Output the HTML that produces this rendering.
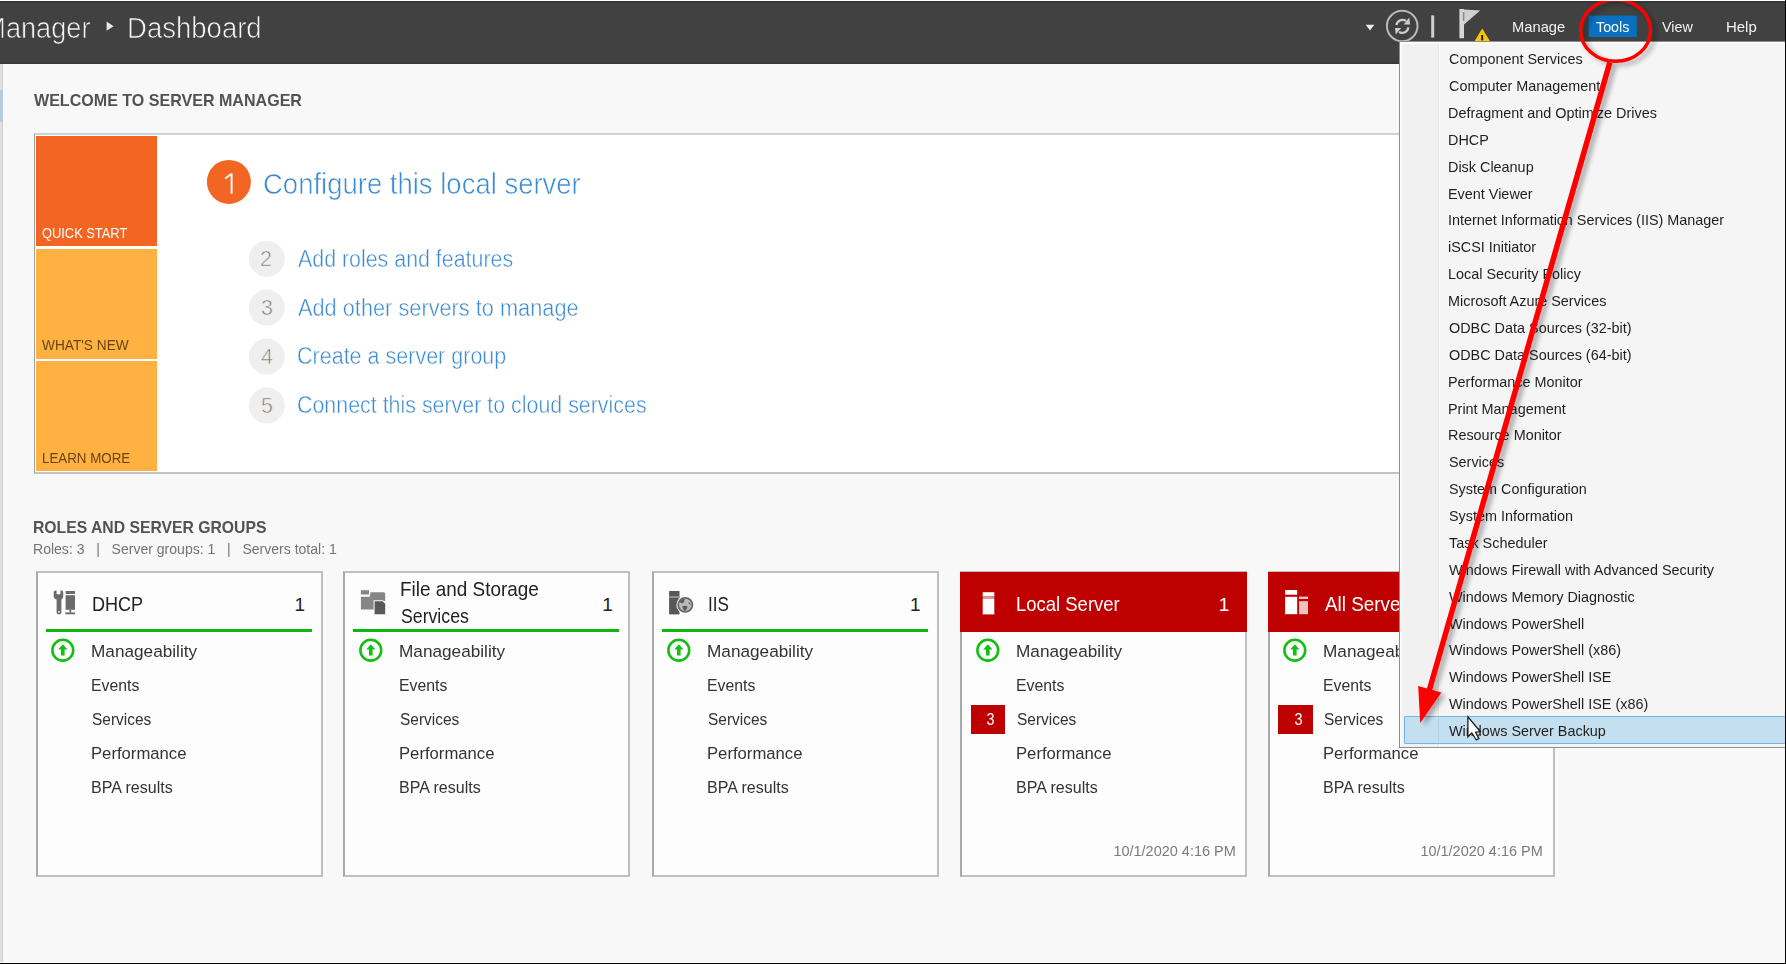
<!DOCTYPE html>
<html><head><meta charset="utf-8">
<style>
*{margin:0;padding:0;box-sizing:border-box}
html,body{width:1786px;height:964px;overflow:hidden}
body{position:relative;background:#f8f8f8;font-family:"Liberation Sans",sans-serif;color:#333}
.a{position:absolute}
.t{position:absolute;white-space:nowrap}
.card{top:571px;width:287px;height:305.5px;background:#fdfdfd;border:2px solid #bfbfbf;border-left-color:#a9a9a9}
.badge{top:704.6px;width:34.4px;height:29.6px;background:#bf0000}
</style></head><body>
<div class="a" style="left:0;top:0;width:1786px;height:1px;background:#fff"></div>
<div class="a" style="left:0;top:1px;width:1786px;height:2px;background:#353535"></div>
<div class="a" style="left:0;top:3px;width:1786px;height:59px;background:#414141"></div>
<div class="a" style="left:0;top:62px;width:1786px;height:2px;background:#3a3a3a"></div>
<div class="a" style="left:0;top:64px;width:2px;height:898px;background:#e0e0e0"></div>
<div class="a" style="left:2px;top:64px;width:1px;height:898px;background:#d0d0d0"></div>
<div class="a" style="left:0;top:90px;width:3px;height:32px;background:#b9cbd8"></div>
<div class="a" style="left:0;top:962px;width:1786px;height:1px;background:#fff"></div>
<div class="a" style="left:0;top:963px;width:1786px;height:1px;background:#000"></div>
<div class="a" style="left:1785px;top:0;width:1px;height:964px;background:#000"></div>
<!-- breadcrumb triangle -->
<svg class="a" style="left:0;top:0" width="200" height="64"><polygon points="106.6,21.6 113.6,26.2 106.6,30.8" fill="#e8e8e8"/></svg>

<!-- welcome box -->
<div class="a" style="left:34.3px;top:133.4px;width:1500px;height:340.8px;background:#fff;border-style:solid;border-color:#cdd1d5 #bdbdbd #c4c4c4 #a2a2a2;border-width:2.4px 0 2.4px 1.8px"></div>
<div class="a" style="left:36.3px;top:136.0px;width:120.3px;height:110.2px;background:#f26522"></div>
<div class="a" style="left:36.3px;top:248.9px;width:120.3px;height:109.7px;background:#ffb142"></div>
<div class="a" style="left:36.3px;top:361.2px;width:120.3px;height:110.1px;background:#ffb142"></div>
<svg class="a" style="left:0;top:0" width="300" height="480">
<circle cx="228.9" cy="181.9" r="22" fill="#f26522"/>
<path d="M231.6 173.6 L231.6 193.7 M231.6 173.8 L225.2 178.6" stroke="#fff" stroke-width="1.9" fill="none"/>
<circle cx="266.8" cy="258.8" r="18" fill="#efefef"/>
<circle cx="266.8" cy="307.6" r="18" fill="#efefef"/>
<circle cx="266.8" cy="356.6" r="18" fill="#efefef"/>
<circle cx="266.8" cy="405.6" r="18" fill="#efefef"/>
</svg>
<div class="a card" style="left:36.0px"></div>
<div class="a" style="left:46.0px;top:629px;width:266px;height:3.2px;background:#0bb80b"></div>
<svg class="a" style="left:51.4px;top:638px" width="25" height="25" viewBox="0 0 25 25"><circle cx="11.8" cy="12.2" r="10.4" fill="none" stroke="#13bf13" stroke-width="2.6"/><path d="M11.8 6.2 L16.4 11.6 L13.6 11.6 L13.6 17.6 L10.0 17.6 L10.0 11.6 L7.2 11.6 Z" fill="#13bf13"/></svg>
<div class="a card" style="left:343.4px"></div>
<div class="a" style="left:353.4px;top:629px;width:266px;height:3.2px;background:#0bb80b"></div>
<svg class="a" style="left:358.8px;top:638px" width="25" height="25" viewBox="0 0 25 25"><circle cx="11.8" cy="12.2" r="10.4" fill="none" stroke="#13bf13" stroke-width="2.6"/><path d="M11.8 6.2 L16.4 11.6 L13.6 11.6 L13.6 17.6 L10.0 17.6 L10.0 11.6 L7.2 11.6 Z" fill="#13bf13"/></svg>
<div class="a card" style="left:651.6px"></div>
<div class="a" style="left:661.6px;top:629px;width:266px;height:3.2px;background:#0bb80b"></div>
<svg class="a" style="left:667.0px;top:638px" width="25" height="25" viewBox="0 0 25 25"><circle cx="11.8" cy="12.2" r="10.4" fill="none" stroke="#13bf13" stroke-width="2.6"/><path d="M11.8 6.2 L16.4 11.6 L13.6 11.6 L13.6 17.6 L10.0 17.6 L10.0 11.6 L7.2 11.6 Z" fill="#13bf13"/></svg>
<div class="a card" style="left:960.3px"></div>
<div class="a" style="left:960.3px;top:572px;width:287px;height:60.2px;background:#bf0000"></div>
<div class="a badge" style="left:970.7px"></div>
<svg class="a" style="left:975.7px;top:638px" width="25" height="25" viewBox="0 0 25 25"><circle cx="11.8" cy="12.2" r="10.4" fill="none" stroke="#13bf13" stroke-width="2.6"/><path d="M11.8 6.2 L16.4 11.6 L13.6 11.6 L13.6 17.6 L10.0 17.6 L10.0 11.6 L7.2 11.6 Z" fill="#13bf13"/></svg>
<div class="a card" style="left:1268.0px"></div>
<div class="a" style="left:1268.0px;top:572px;width:287px;height:60.2px;background:#bf0000"></div>
<div class="a badge" style="left:1278.4px"></div>
<svg class="a" style="left:1283.4px;top:638px" width="25" height="25" viewBox="0 0 25 25"><circle cx="11.8" cy="12.2" r="10.4" fill="none" stroke="#13bf13" stroke-width="2.6"/><path d="M11.8 6.2 L16.4 11.6 L13.6 11.6 L13.6 17.6 L10.0 17.6 L10.0 11.6 L7.2 11.6 Z" fill="#13bf13"/></svg>
<svg class="a" style="left:0;top:0" width="1400" height="964">
<g fill="#6b6b6b">
 <path d="M53.7 592.5 Q53.7 590.4 55.6 590.4 L56.6 590.4 L56.6 594.2 L60.4 594.2 L60.4 590.4 L61.3 590.4 Q63.2 590.4 63.2 592.5 L63.2 596.5 Q63.2 598.8 61.4 599.4 L61.4 612.4 Q61.4 614.4 59.0 614.4 Q56.6 614.4 56.6 612.4 L56.6 599.4 Q53.7 598.8 53.7 596.5 Z"/>
 <rect x="65.6" y="591" width="9.4" height="3" />
 <rect x="65.6" y="595.2" width="9.4" height="14.6" />
 <rect x="69.4" y="609.6" width="1.8" height="3"/>
 <rect x="65.3" y="612.4" width="9.8" height="1.9"/>
</g>
<circle cx="59" cy="611.8" r="0.9" fill="#fdfdfd"/>
<g>
 <rect x="360.9" y="590.2" width="8.1" height="4.3" fill="#858585"/>
 <path d="M370.6 592.2 L383.6 592.2 Q385.2 592.2 385.2 593.8 L385.2 601 L374.6 601 L374.6 609.5 L360.9 609.5 L360.9 596.8 L369.6 596.8 Z" fill="#858585"/>
 <path d="M373.6 600.2 L383 600.2 L386.2 603.4 L386.2 615.2 L373.6 615.2 Z" fill="#fdfdfd"/>
 <path d="M374.6 601.2 L382.6 601.2 L385.2 603.8 L385.2 614.2 L374.6 614.2 Z" fill="#595959"/>
</g>
<g>
 <rect x="669.1" y="591" width="10.4" height="23.4" fill="#585858"/>
 <rect x="669.1" y="596.2" width="10.4" height="1.6" fill="#a0a0a0"/>
 <circle cx="685.3" cy="604.9" r="8.9" fill="#fdfdfd"/>
 <circle cx="685.3" cy="604.9" r="7.1" fill="#b9b9b9" stroke="#666" stroke-width="1.7"/>
 <path d="M680.2 600.6 Q682.2 598.6 684.6 599.0 Q684.4 601.4 683.4 603.0 Q681.2 603.6 680.0 602.6 Z" fill="#5a5a5a"/>
 <path d="M682.2 606.2 Q684.8 605.4 687.6 606.4 Q687.4 609.4 684.8 611.2 Q683.0 609.2 682.2 606.2 Z" fill="#5a5a5a"/>
 <path d="M688.0 601.6 Q690.2 602.6 690.8 604.6 Q689.2 605.0 688.0 601.6 Z" fill="#5a5a5a"/>
</g>
<g fill="#ffffff">
 <rect x="982.7" y="592.2" width="11.6" height="4.2"/>
 <rect x="982.7" y="596.4" width="11.6" height="2.5" fill="#e39a9a"/>
 <rect x="982.7" y="598.9" width="11.6" height="15.5"/>
</g>
<g>
 <rect x="1285.1" y="590" width="12.1" height="4.7" fill="#fff"/>
 <rect x="1285.1" y="596.8" width="12.1" height="17.4" fill="#fff"/>
 <rect x="1299" y="596.6" width="9" height="2.4" fill="#efc5c5"/>
 <rect x="1299" y="601.2" width="9" height="13" fill="#efc2c2"/>
</g>
</svg>
<div id="t0" class="t" style="right:1695.46px;top:13.32px;font-size:29.50px;line-height:29.50px;color:#f4f4f4;font-weight:normal;transform:scaleX(0.9200);transform-origin:right 0;-webkit-text-stroke:0.7px #414141;">Manager</div>
<div id="t1" class="t" style="left:126.63px;top:13.32px;font-size:29.50px;line-height:29.50px;color:#f4f4f4;font-weight:normal;transform:scaleX(0.9332);transform-origin:left 0;-webkit-text-stroke:0.7px #414141;">Dashboard</div>
<div id="t6" class="t" style="left:33.60px;top:91.61px;font-size:17.00px;line-height:17.00px;color:#525252;font-weight:bold;transform:scaleX(0.9446);transform-origin:left 0;">WELCOME TO SERVER MANAGER</div>
<div id="t7" class="t" style="left:42.00px;top:224.68px;font-size:15.50px;line-height:15.50px;color:#ffffff;font-weight:normal;transform:scaleX(0.8296);transform-origin:left 0;">QUICK START</div>
<div id="t8" class="t" style="left:42.00px;top:337.08px;font-size:15.50px;line-height:15.50px;color:#6a4512;font-weight:normal;transform:scaleX(0.8822);transform-origin:left 0;">WHAT'S NEW</div>
<div id="t9" class="t" style="left:41.84px;top:449.68px;font-size:15.50px;line-height:15.50px;color:#6a4512;font-weight:normal;transform:scaleX(0.8601);transform-origin:left 0;">LEARN MORE</div>
<div id="t10" class="t" style="left:262.87px;top:168.72px;font-size:29.50px;line-height:29.50px;color:#3a8ad4;font-weight:normal;transform:scaleX(0.9318);transform-origin:left 0;-webkit-text-stroke:0.6px #fff;">Configure this local server</div>
<div id="t11" class="t" style="left:298.30px;top:247.67px;font-size:23.30px;line-height:23.30px;color:#3a8ad4;font-weight:normal;transform:scaleX(0.9176);transform-origin:left 0;-webkit-text-stroke:0.45px #fff;">Add roles and features</div>
<div id="t12" class="t" style="left:260.00px;top:249.20px;font-size:21.50px;line-height:21.50px;color:#7a7a7a;font-weight:normal;-webkit-text-stroke:0.6px #efefef;">2</div>
<div id="t13" class="t" style="left:298.30px;top:296.57px;font-size:23.30px;line-height:23.30px;color:#3a8ad4;font-weight:normal;transform:scaleX(0.9340);transform-origin:left 0;-webkit-text-stroke:0.45px #fff;">Add other servers to manage</div>
<div id="t14" class="t" style="left:261.00px;top:298.10px;font-size:21.50px;line-height:21.50px;color:#7a7a7a;font-weight:normal;-webkit-text-stroke:0.6px #efefef;">3</div>
<div id="t15" class="t" style="left:297.38px;top:345.47px;font-size:23.30px;line-height:23.30px;color:#3a8ad4;font-weight:normal;transform:scaleX(0.9236);transform-origin:left 0;-webkit-text-stroke:0.45px #fff;">Create a server group</div>
<div id="t16" class="t" style="left:261.00px;top:347.00px;font-size:21.50px;line-height:21.50px;color:#7a7a7a;font-weight:normal;-webkit-text-stroke:0.6px #efefef;">4</div>
<div id="t17" class="t" style="left:297.38px;top:394.37px;font-size:23.30px;line-height:23.30px;color:#3a8ad4;font-weight:normal;transform:scaleX(0.9184);transform-origin:left 0;-webkit-text-stroke:0.45px #fff;">Connect this server to cloud services</div>
<div id="t18" class="t" style="left:261.00px;top:395.90px;font-size:21.50px;line-height:21.50px;color:#7a7a7a;font-weight:normal;-webkit-text-stroke:0.6px #efefef;">5</div>
<div id="t19" class="t" style="left:33.05px;top:519.33px;font-size:16.50px;line-height:16.50px;color:#525252;font-weight:bold;transform:scaleX(0.9534);transform-origin:left 0;">ROLES AND SERVER GROUPS</div>
<div id="t20" class="t" style="left:33.00px;top:542.15px;font-size:14.00px;line-height:14.00px;color:#747474;font-weight:normal;transform:scaleX(1.0028);transform-origin:left 0;">Roles: 3 &nbsp; | &nbsp; Server groups: 1 &nbsp; | &nbsp; Servers total: 1</div>
<div id="t21" class="t" style="left:91.91px;top:594.01px;font-size:20.30px;line-height:20.30px;color:#222222;font-weight:normal;transform:scaleX(0.8885);transform-origin:left 0;">DHCP</div>
<div id="t22" class="t" style="right:1481.03px;top:595.11px;font-size:19.00px;line-height:19.00px;color:#222222;font-weight:normal;">1</div>
<div id="t23" class="t" style="left:91.31px;top:642.87px;font-size:17.40px;line-height:17.40px;color:#333333;font-weight:normal;transform:scaleX(0.9886);transform-origin:left 0;">Manageability</div>
<div id="t24" class="t" style="left:91.39px;top:677.02px;font-size:17.40px;line-height:17.40px;color:#333333;font-weight:normal;transform:scaleX(0.9091);transform-origin:left 0;">Events</div>
<div id="t25" class="t" style="left:92.30px;top:711.17px;font-size:17.40px;line-height:17.40px;color:#333333;font-weight:normal;transform:scaleX(0.8897);transform-origin:left 0;">Services</div>
<div id="t26" class="t" style="left:91.34px;top:745.32px;font-size:17.40px;line-height:17.40px;color:#333333;font-weight:normal;transform:scaleX(0.9583);transform-origin:left 0;">Performance</div>
<div id="t27" class="t" style="left:91.38px;top:779.47px;font-size:17.40px;line-height:17.40px;color:#333333;font-weight:normal;transform:scaleX(0.9216);transform-origin:left 0;">BPA results</div>
<div id="t28" class="t" style="left:399.64px;top:580.44px;font-size:19.80px;line-height:19.80px;color:#222222;font-weight:normal;transform:scaleX(0.9559);transform-origin:left 0;">File and Storage</div>
<div id="t29" class="t" style="left:400.60px;top:607.24px;font-size:19.80px;line-height:19.80px;color:#222222;font-weight:normal;transform:scaleX(0.8939);transform-origin:left 0;">Services</div>
<div id="t30" class="t" style="right:1173.13px;top:594.51px;font-size:19.00px;line-height:19.00px;color:#222222;font-weight:normal;">1</div>
<div id="t31" class="t" style="left:398.71px;top:642.87px;font-size:17.40px;line-height:17.40px;color:#333333;font-weight:normal;transform:scaleX(0.9886);transform-origin:left 0;">Manageability</div>
<div id="t32" class="t" style="left:398.79px;top:677.02px;font-size:17.40px;line-height:17.40px;color:#333333;font-weight:normal;transform:scaleX(0.9091);transform-origin:left 0;">Events</div>
<div id="t33" class="t" style="left:399.70px;top:711.17px;font-size:17.40px;line-height:17.40px;color:#333333;font-weight:normal;transform:scaleX(0.8897);transform-origin:left 0;">Services</div>
<div id="t34" class="t" style="left:398.74px;top:745.32px;font-size:17.40px;line-height:17.40px;color:#333333;font-weight:normal;transform:scaleX(0.9583);transform-origin:left 0;">Performance</div>
<div id="t35" class="t" style="left:398.78px;top:779.47px;font-size:17.40px;line-height:17.40px;color:#333333;font-weight:normal;transform:scaleX(0.9216);transform-origin:left 0;">BPA results</div>
<div id="t36" class="t" style="left:707.56px;top:594.01px;font-size:20.30px;line-height:20.30px;color:#222222;font-weight:normal;transform:scaleX(0.8423);transform-origin:left 0;">IIS</div>
<div id="t37" class="t" style="right:865.43px;top:595.11px;font-size:19.00px;line-height:19.00px;color:#222222;font-weight:normal;">1</div>
<div id="t38" class="t" style="left:706.91px;top:642.87px;font-size:17.40px;line-height:17.40px;color:#333333;font-weight:normal;transform:scaleX(0.9886);transform-origin:left 0;">Manageability</div>
<div id="t39" class="t" style="left:706.99px;top:677.02px;font-size:17.40px;line-height:17.40px;color:#333333;font-weight:normal;transform:scaleX(0.9091);transform-origin:left 0;">Events</div>
<div id="t40" class="t" style="left:707.90px;top:711.17px;font-size:17.40px;line-height:17.40px;color:#333333;font-weight:normal;transform:scaleX(0.8897);transform-origin:left 0;">Services</div>
<div id="t41" class="t" style="left:706.94px;top:745.32px;font-size:17.40px;line-height:17.40px;color:#333333;font-weight:normal;transform:scaleX(0.9583);transform-origin:left 0;">Performance</div>
<div id="t42" class="t" style="left:706.98px;top:779.47px;font-size:17.40px;line-height:17.40px;color:#333333;font-weight:normal;transform:scaleX(0.9216);transform-origin:left 0;">BPA results</div>
<div id="t43" class="t" style="left:1016.19px;top:594.01px;font-size:20.30px;line-height:20.30px;color:#ffffff;font-weight:normal;transform:scaleX(0.9107);transform-origin:left 0;">Local Server</div>
<div id="t44" class="t" style="right:556.73px;top:595.11px;font-size:19.00px;line-height:19.00px;color:#ffffff;font-weight:normal;">1</div>
<div id="t45" class="t" style="left:1015.61px;top:642.87px;font-size:17.40px;line-height:17.40px;color:#333333;font-weight:normal;transform:scaleX(0.9886);transform-origin:left 0;">Manageability</div>
<div id="t46" class="t" style="left:1015.69px;top:677.02px;font-size:17.40px;line-height:17.40px;color:#333333;font-weight:normal;transform:scaleX(0.9091);transform-origin:left 0;">Events</div>
<div id="t47" class="t" style="left:1016.60px;top:711.17px;font-size:17.40px;line-height:17.40px;color:#333333;font-weight:normal;transform:scaleX(0.8897);transform-origin:left 0;">Services</div>
<div id="t48" class="t" style="left:1015.64px;top:745.32px;font-size:17.40px;line-height:17.40px;color:#333333;font-weight:normal;transform:scaleX(0.9583);transform-origin:left 0;">Performance</div>
<div id="t49" class="t" style="left:1015.68px;top:779.47px;font-size:17.40px;line-height:17.40px;color:#333333;font-weight:normal;transform:scaleX(0.9216);transform-origin:left 0;">BPA results</div>
<div id="t50" class="t" style="right:791.61px;top:711.31px;font-size:17.00px;line-height:17.00px;color:#ffffff;font-weight:normal;transform:scaleX(0.8500);transform-origin:right 0;">3</div>
<div id="t51" class="t" style="right:550.62px;top:842.50px;font-size:15.00px;line-height:15.00px;color:#7a7a7a;font-weight:normal;transform:scaleX(0.9652);transform-origin:right 0;">10/1/2020 4:16 PM</div>
<div id="t52" class="t" style="left:1324.80px;top:594.01px;font-size:20.30px;line-height:20.30px;color:#ffffff;font-weight:normal;transform:scaleX(0.9300);transform-origin:left 0;">All Servers</div>
<div id="t53" class="t" style="right:249.03px;top:595.11px;font-size:19.00px;line-height:19.00px;color:#ffffff;font-weight:normal;">1</div>
<div id="t54" class="t" style="left:1323.31px;top:642.87px;font-size:17.40px;line-height:17.40px;color:#333333;font-weight:normal;transform:scaleX(0.9886);transform-origin:left 0;">Manageability</div>
<div id="t55" class="t" style="left:1323.39px;top:677.02px;font-size:17.40px;line-height:17.40px;color:#333333;font-weight:normal;transform:scaleX(0.9091);transform-origin:left 0;">Events</div>
<div id="t56" class="t" style="left:1324.30px;top:711.17px;font-size:17.40px;line-height:17.40px;color:#333333;font-weight:normal;transform:scaleX(0.8897);transform-origin:left 0;">Services</div>
<div id="t57" class="t" style="left:1323.34px;top:745.32px;font-size:17.40px;line-height:17.40px;color:#333333;font-weight:normal;transform:scaleX(0.9583);transform-origin:left 0;">Performance</div>
<div id="t58" class="t" style="left:1323.38px;top:779.47px;font-size:17.40px;line-height:17.40px;color:#333333;font-weight:normal;transform:scaleX(0.9216);transform-origin:left 0;">BPA results</div>
<div id="t59" class="t" style="right:483.91px;top:711.31px;font-size:17.00px;line-height:17.00px;color:#ffffff;font-weight:normal;transform:scaleX(0.8500);transform-origin:right 0;">3</div>
<div id="t60" class="t" style="right:242.92px;top:842.50px;font-size:15.00px;line-height:15.00px;color:#7a7a7a;font-weight:normal;transform:scaleX(0.9652);transform-origin:right 0;">10/1/2020 4:16 PM</div>
<svg class="a" style="left:1350px;top:0" width="436" height="64">
<polygon points="15.7,24.7 24.3,24.7 20,30.5" fill="#f0f0f0"/>
<circle cx="52.2" cy="26" r="15.3" fill="none" stroke="#b9b9b9" stroke-width="2"/>
<path d="M46.4 25.0 A6.3 6.3 0 0 1 56.0 20.9" fill="none" stroke="#cdcdcd" stroke-width="2.3"/>
<polygon points="53.6,24.6 60.1,24.6 59.3,17.4" fill="#cdcdcd"/>
<path d="M58.4 27.4 A6.3 6.3 0 0 1 49.0 32.0" fill="none" stroke="#cdcdcd" stroke-width="2.3"/>
<polygon points="45.1,28.0 51.2,28.0 45.7,34.4" fill="#cdcdcd"/>
<rect x="81.2" y="15.4" width="3" height="22.2" fill="#cfcfcf"/>
<rect x="109.4" y="9" width="4.6" height="29.2" fill="#d6d6d6"/>
<polygon points="114,9.6 130.2,10.4 114,24.6" fill="#d0d0d0"/>
<rect x="112.8" y="12" width="1.6" height="9" fill="#8a8a8a"/>
<polygon points="132.2,28.4 124.4,41.6 140.2,41.6" fill="#ffc600"/>
<rect x="131.2" y="35.0" width="2.0" height="5.4" fill="#1a1a1a"/>
<rect x="238.5" y="15.6" width="48.3" height="21.4" fill="#0b6fc0"/>
</svg>
<div id="t2" class="t" style="left:1511.79px;top:19.92px;font-size:14.50px;line-height:14.50px;color:#f2f2f2;font-weight:normal;transform:scaleX(1.0149);transform-origin:left 0;">Manage</div>
<div id="t3" class="t" style="left:1596.10px;top:20.02px;font-size:14.50px;line-height:14.50px;color:#ffffff;font-weight:normal;transform:scaleX(0.9851);transform-origin:left 0;">Tools</div>
<div id="t4" class="t" style="left:1661.70px;top:19.92px;font-size:14.50px;line-height:14.50px;color:#f2f2f2;font-weight:normal;transform:scaleX(0.9875);transform-origin:left 0;">View</div>
<div id="t5" class="t" style="left:1726.37px;top:19.92px;font-size:14.50px;line-height:14.50px;color:#f2f2f2;font-weight:normal;transform:scaleX(1.0293);transform-origin:left 0;">Help</div>
<div class="a" style="left:1398.8px;top:40.8px;width:387px;height:707.4px;background:#8e8e8e"></div>
<div class="a" style="left:1400.4px;top:42.4px;width:385px;height:704.4px;background:#fafafa"></div>
<div class="a" style="left:1402.4px;top:44.2px;width:35.2px;height:702.6px;background:#f1f1f1"></div>
<div class="a" style="left:1437.6px;top:44.2px;width:1px;height:702.6px;background:#e6e6e6"></div>
<div class="a" style="left:1438.6px;top:44.2px;width:1.4px;height:702.6px;background:#fbfbfb"></div>
<div class="a" style="left:1440px;top:44.2px;width:346px;height:702.6px;background:#f5f5f5"></div>
<div class="a" style="left:1404.2px;top:716.4px;width:382px;height:27.4px;background:#c4dff0;border:1.6px solid #72b6e2;border-right:none;border-radius:2px 0 0 2px"></div>
<div class="a" style="left:1437.6px;top:718px;width:1px;height:24.2px;background:#b3d2e6"></div>
<div id="t61" class="t" style="left:1448.50px;top:51.10px;font-size:15.00px;line-height:15.00px;color:#1e1e1e;font-weight:normal;transform:scaleX(0.9600);transform-origin:left 0;">Component Services</div>
<div id="t62" class="t" style="left:1448.50px;top:77.98px;font-size:15.00px;line-height:15.00px;color:#1e1e1e;font-weight:normal;transform:scaleX(0.9600);transform-origin:left 0;">Computer Management</div>
<div id="t63" class="t" style="left:1447.54px;top:104.86px;font-size:15.00px;line-height:15.00px;color:#1e1e1e;font-weight:normal;transform:scaleX(0.9600);transform-origin:left 0;">Defragment and Optimize Drives</div>
<div id="t64" class="t" style="left:1447.54px;top:131.74px;font-size:15.00px;line-height:15.00px;color:#1e1e1e;font-weight:normal;transform:scaleX(0.9600);transform-origin:left 0;">DHCP</div>
<div id="t65" class="t" style="left:1447.54px;top:158.62px;font-size:15.00px;line-height:15.00px;color:#1e1e1e;font-weight:normal;transform:scaleX(0.9600);transform-origin:left 0;">Disk Cleanup</div>
<div id="t66" class="t" style="left:1447.54px;top:185.50px;font-size:15.00px;line-height:15.00px;color:#1e1e1e;font-weight:normal;transform:scaleX(0.9600);transform-origin:left 0;">Event Viewer</div>
<div id="t67" class="t" style="left:1447.54px;top:212.38px;font-size:15.00px;line-height:15.00px;color:#1e1e1e;font-weight:normal;transform:scaleX(0.9600);transform-origin:left 0;">Internet Information Services (IIS) Manager</div>
<div id="t68" class="t" style="left:1447.54px;top:239.26px;font-size:15.00px;line-height:15.00px;color:#1e1e1e;font-weight:normal;transform:scaleX(0.9600);transform-origin:left 0;">iSCSI Initiator</div>
<div id="t69" class="t" style="left:1447.54px;top:266.14px;font-size:15.00px;line-height:15.00px;color:#1e1e1e;font-weight:normal;transform:scaleX(0.9600);transform-origin:left 0;">Local Security Policy</div>
<div id="t70" class="t" style="left:1447.54px;top:293.02px;font-size:15.00px;line-height:15.00px;color:#1e1e1e;font-weight:normal;transform:scaleX(0.9600);transform-origin:left 0;">Microsoft Azure Services</div>
<div id="t71" class="t" style="left:1448.50px;top:319.90px;font-size:15.00px;line-height:15.00px;color:#1e1e1e;font-weight:normal;transform:scaleX(0.9600);transform-origin:left 0;">ODBC Data Sources (32-bit)</div>
<div id="t72" class="t" style="left:1448.50px;top:346.78px;font-size:15.00px;line-height:15.00px;color:#1e1e1e;font-weight:normal;transform:scaleX(0.9600);transform-origin:left 0;">ODBC Data Sources (64-bit)</div>
<div id="t73" class="t" style="left:1447.54px;top:373.66px;font-size:15.00px;line-height:15.00px;color:#1e1e1e;font-weight:normal;transform:scaleX(0.9600);transform-origin:left 0;">Performance Monitor</div>
<div id="t74" class="t" style="left:1447.54px;top:400.54px;font-size:15.00px;line-height:15.00px;color:#1e1e1e;font-weight:normal;transform:scaleX(0.9600);transform-origin:left 0;">Print Management</div>
<div id="t75" class="t" style="left:1447.54px;top:427.42px;font-size:15.00px;line-height:15.00px;color:#1e1e1e;font-weight:normal;transform:scaleX(0.9600);transform-origin:left 0;">Resource Monitor</div>
<div id="t76" class="t" style="left:1448.50px;top:454.30px;font-size:15.00px;line-height:15.00px;color:#1e1e1e;font-weight:normal;transform:scaleX(0.9600);transform-origin:left 0;">Services</div>
<div id="t77" class="t" style="left:1448.50px;top:481.18px;font-size:15.00px;line-height:15.00px;color:#1e1e1e;font-weight:normal;transform:scaleX(0.9600);transform-origin:left 0;">System Configuration</div>
<div id="t78" class="t" style="left:1448.50px;top:508.06px;font-size:15.00px;line-height:15.00px;color:#1e1e1e;font-weight:normal;transform:scaleX(0.9600);transform-origin:left 0;">System Information</div>
<div id="t79" class="t" style="left:1448.50px;top:534.94px;font-size:15.00px;line-height:15.00px;color:#1e1e1e;font-weight:normal;transform:scaleX(0.9600);transform-origin:left 0;">Task Scheduler</div>
<div id="t80" class="t" style="left:1448.50px;top:561.82px;font-size:15.00px;line-height:15.00px;color:#1e1e1e;font-weight:normal;transform:scaleX(0.9600);transform-origin:left 0;">Windows Firewall with Advanced Security</div>
<div id="t81" class="t" style="left:1448.50px;top:588.70px;font-size:15.00px;line-height:15.00px;color:#1e1e1e;font-weight:normal;transform:scaleX(0.9600);transform-origin:left 0;">Windows Memory Diagnostic</div>
<div id="t82" class="t" style="left:1448.50px;top:615.58px;font-size:15.00px;line-height:15.00px;color:#1e1e1e;font-weight:normal;transform:scaleX(0.9600);transform-origin:left 0;">Windows PowerShell</div>
<div id="t83" class="t" style="left:1448.50px;top:642.46px;font-size:15.00px;line-height:15.00px;color:#1e1e1e;font-weight:normal;transform:scaleX(0.9600);transform-origin:left 0;">Windows PowerShell (x86)</div>
<div id="t84" class="t" style="left:1448.50px;top:669.34px;font-size:15.00px;line-height:15.00px;color:#1e1e1e;font-weight:normal;transform:scaleX(0.9600);transform-origin:left 0;">Windows PowerShell ISE</div>
<div id="t85" class="t" style="left:1448.50px;top:696.22px;font-size:15.00px;line-height:15.00px;color:#1e1e1e;font-weight:normal;transform:scaleX(0.9600);transform-origin:left 0;">Windows PowerShell ISE (x86)</div>
<div id="t86" class="t" style="left:1448.50px;top:723.10px;font-size:15.00px;line-height:15.00px;color:#1e1e1e;font-weight:normal;transform:scaleX(0.9600);transform-origin:left 0;">Windows Server Backup</div>
<svg class="a" style="left:0;top:0" width="1786" height="964">
<defs><filter id="sh" x="-20%" y="-20%" width="140%" height="140%"><feGaussianBlur in="SourceAlpha" stdDeviation="2.6"/><feOffset dx="4" dy="3" result="b"/><feComponentTransfer><feFuncA type="linear" slope="0.32"/></feComponentTransfer><feMerge><feMergeNode/><feMergeNode in="SourceGraphic"/></feMerge></filter></defs>
<g filter="url(#sh)">
<ellipse cx="1615.6" cy="30.4" rx="34.95" ry="30.95" fill="none" stroke="#fe0000" stroke-width="3.5"/>
<line x1="1609.80" y1="62.40" x2="1429.37" y2="690.00" stroke="#fe0000" stroke-width="5.5"/>
<polygon points="1418.2,686.0 1441.4,692.6 1420.2,722.9" fill="#fe0000"/>
</g>
<polygon points="1467.9,716.8 1467.9,736.8 1471.8,733.0 1476.4,740.0 1478.9,738.6 1475.6,732.2 1480.2,731.6" fill="#fff" stroke="#1a1a1a" stroke-width="1.3" stroke-linejoin="miter"/>
</svg>
<div class="a" style="left:0;top:0;width:1786px;height:1px;background:#fff"></div>
<div class="a" style="left:1785px;top:0;width:1px;height:964px;background:#000"></div>
<div class="a" style="left:0;top:963px;width:1786px;height:1px;background:#000"></div>
</body></html>
